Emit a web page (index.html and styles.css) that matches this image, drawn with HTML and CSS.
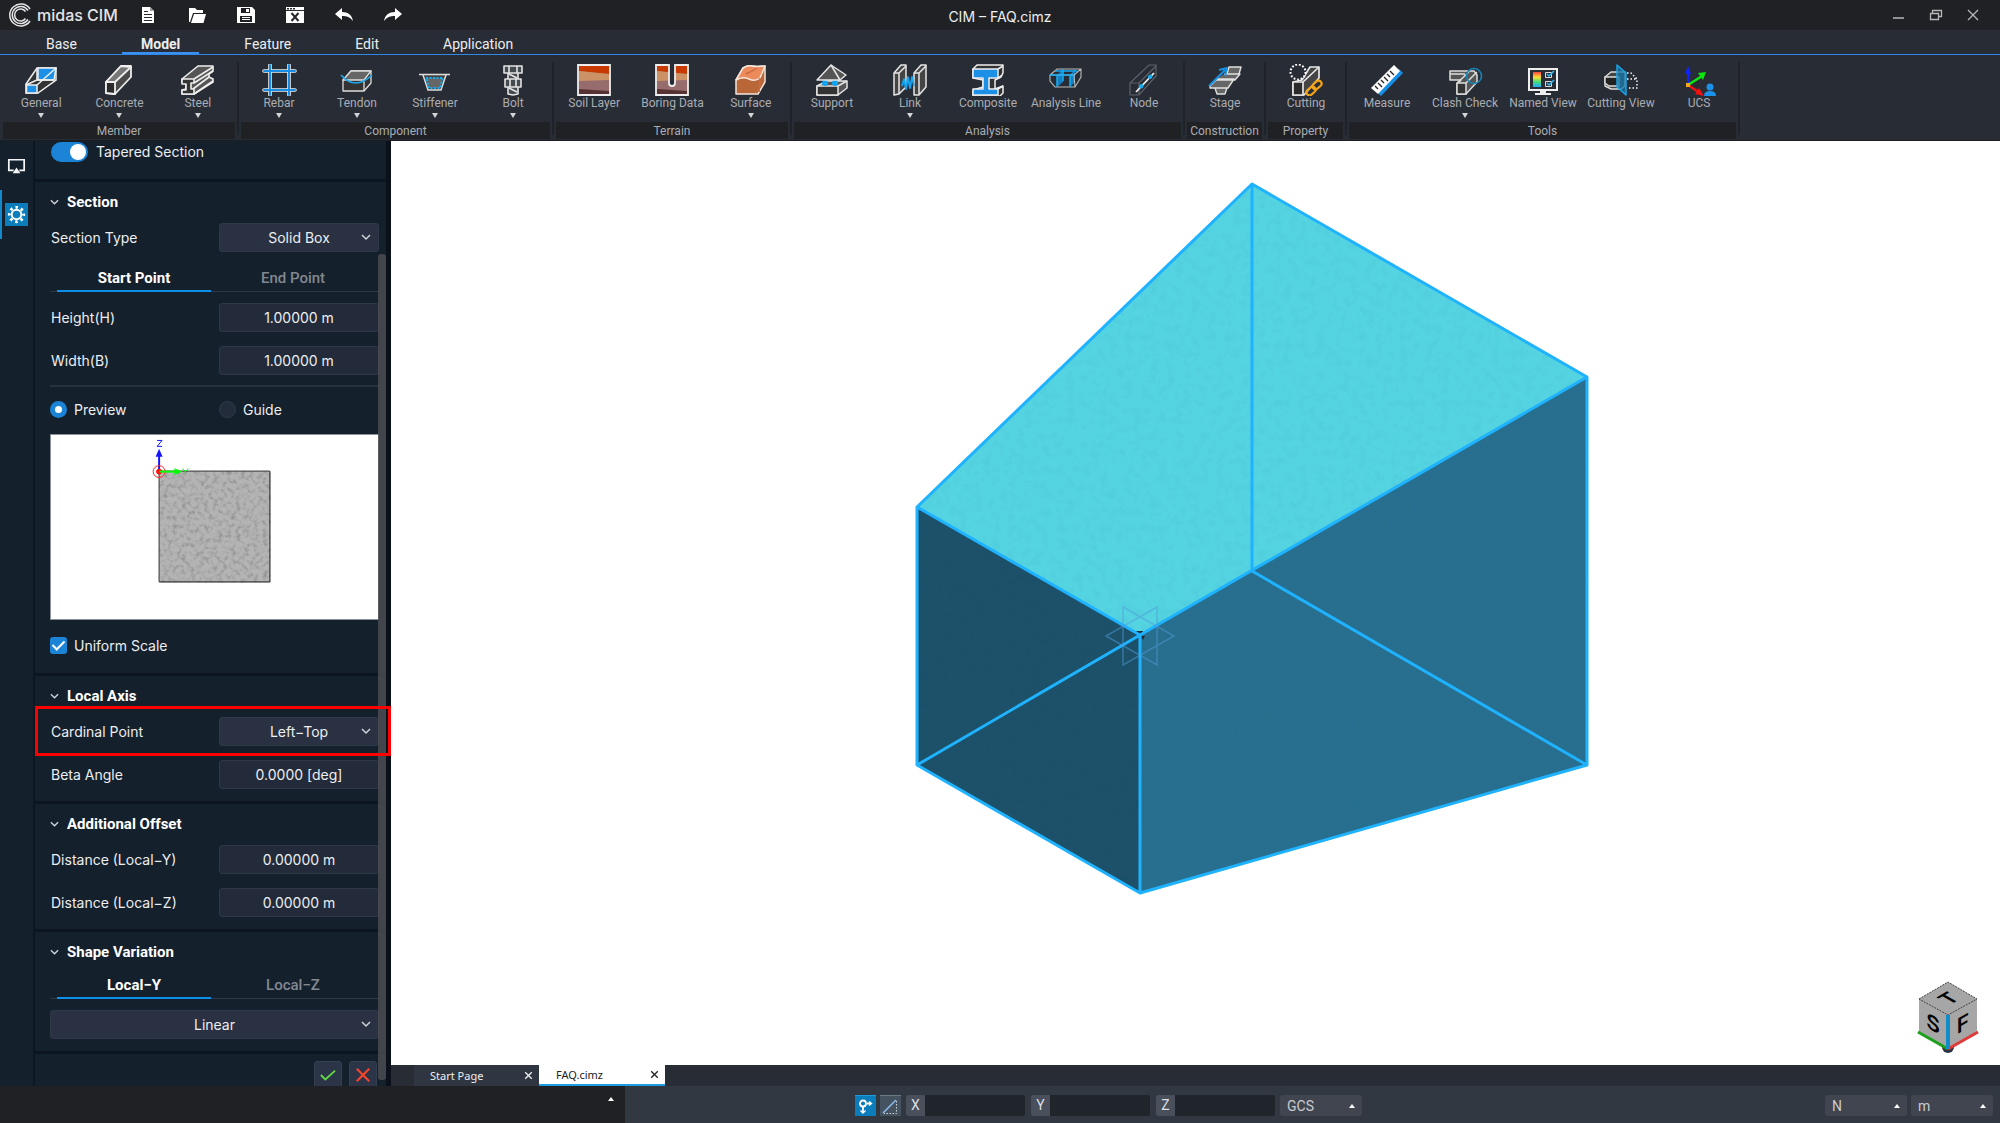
FILE: index.html
```html
<!DOCTYPE html>
<html lang="en">
<head>
<meta charset="utf-8">
<title>CIM – FAQ.cimz</title>
<link rel="stylesheet" href="styles.css">
</head>
<body>
<div class="app">
  <header class="titlebar">
    <div class="brand">
      <svg class="logo" viewBox="0 0 24 24" fill="none" stroke="#e4e4e6" stroke-width="1.5"><path d="M22 6A11 11 0 1 0 22 18"/><path d="M20 7.500A8.500 8.500 0 1 0 20 16.500"/><path d="M17.500 8.500A6 6 0 1 0 17.500 15.500"/></svg>
      <span class="brand-name">midas CIM</span>
    </div>
    <div class="quick">
      <button aria-label="New"><svg viewBox="0 0 20 20"><path fill="#fff" d="M4 2h8l4 4v12H4z"/><path stroke="#26292e" d="M6 6.500h4M6 9.500h8M6 12.500h8M6 15.500h8"/><path fill="#9a9ca0" d="M12 2v4h4z"/></svg></button>
      <button aria-label="Open"><svg viewBox="0 0 20 20"><path fill="#fff" d="M2 17V3h6l2 2h6v3H6L3 17zM4 18l3-9h12l-2.500 9z"/></svg></button>
      <button aria-label="Save"><svg viewBox="0 0 20 20"><path fill="#fff" fill-rule="evenodd" d="M1 2h15l3 3v13H1zM5 3v5h9V3zM4 11v6h12v-6z"/><path fill="#fff" d="M10 4h3v3h-3zM6 12h8v1H6zM6 14h8v1H6z"/></svg></button>
      <button aria-label="Close file"><svg viewBox="0 0 20 20"><path fill="#fff" d="M1 2h18v16H1z"/><path stroke="#26292e" d="M1 5.500h18"/><path stroke="#26292e" stroke-width="1.500" stroke-dasharray="2 1" d="M2 3.800h8"/><path stroke="#26292e" stroke-width="2" d="M6.500 8l7 8M13.500 8l-7 8"/></svg></button>
      <button aria-label="Undo"><svg viewBox="0 0 20 20"><path fill="#fff" d="M1 9l7-6v4c6 0 10 3 11 9-3-4-6-5-11-5v4z"/></svg></button>
      <button aria-label="Redo"><svg viewBox="0 0 20 20"><path fill="#fff" d="M19 9l-7-6v4C6 7 2 10 1 16c3-4 6-5 11-5v4z"/></svg></button>
    </div>
    <h1 class="doc-title">CIM – FAQ.cimz</h1>
    <div class="window-buttons">
      <button aria-label="Minimize"><svg viewBox="0 0 14 14" stroke="#b6b7b9" fill="none"><path stroke-width="1.500" d="M1 10h11"/></svg></button>
      <button aria-label="Restore"><svg viewBox="0 0 14 14" stroke="#b6b7b9" fill="none" stroke-width="1.300"><path d="M1.500 5.500h8v6h-8zM3.500 5.500v-3h9v6h-3"/></svg></button>
      <button aria-label="Close"><svg viewBox="0 0 14 14" stroke="#b6b7b9" fill="none" stroke-width="1.300"><path d="M2 2l10 10M12 2L2 12"/></svg></button>
    </div>
  </header>

  <nav class="menu">
    <a href="#base">Base</a>
    <a href="#model" class="active">Model</a>
    <a href="#feature">Feature</a>
    <a href="#edit">Edit</a>
    <a href="#application">Application</a>
  </nav>

  <div class="ribbon">
    <section class="group">
      <div class="tools">
        <button class="tool more"><svg viewBox="0 0 36 32" stroke="#eee" stroke-width="1.500" fill="#333"><path d="M3 20L14 4h19v12L15 29H3z"/><path fill="#1c8fe6" d="M15 4h18L31 16H15z"/><path fill="#1c8fe6" d="M3.500 21H14v8H3.500z"/><path fill="none" d="M14 21L33 4M14 4v12l-11 5M14 16h17"/></svg><span>General</span></button>
        <button class="tool more"><svg viewBox="0 0 36 32" stroke="#eee" stroke-width="1.800" fill="#4a4a4a" stroke-linejoin="round"><path d="M5 18L20 2h10v11L14 30l-9-1z"/><path fill="#2b2b2b" d="M5 18h9v12l-9-1z"/><path fill="#777" d="M14 18L30 3 20 2 5 18z"/></svg><span>Concrete</span></button>
        <button class="tool more"><svg viewBox="0 0 36 32" stroke="#eee" stroke-width="1.600" fill="#555" stroke-linejoin="round"><path d="M2 15L18 2h15v5l-4 3v3l4 2v3L14 30H2v-4l4-1v-6l-4-1z"/><path fill="#333" d="M2 15h12v4h-3v6h3v5H2v-4h4v-6H2z"/><path fill="none" d="M14 15L33 3M14 19L33 7M13 25l16-12M14 30l19-13"/></svg><span>Steel</span></button>
      </div>
      <h2>Member</h2>
    </section>
    <section class="group">
      <div class="tools">
        <button class="tool more"><svg viewBox="0 0 36 32" fill="none" stroke-linecap="round"><path stroke="#eee" stroke-width="3.600" d="M9 1v30M28 1v30M3 7h31M3 26h31"/><path stroke="#178de6" stroke-width="2" d="M9 1v30M28 1v30M3 7h31M3 26h31"/></svg><span>Rebar</span></button>
        <button class="tool more"><svg viewBox="0 0 36 32" stroke="#ddd" stroke-width="1.300" fill="#333" stroke-linejoin="round"><path d="M4 16L12 7h20v12l-7 8H4z"/><path fill="#666" d="M4 16L12 7h20l-7 9z"/><path fill="none" d="M25 16v11"/><path fill="none" stroke="#1ba9ee" stroke-width="1.700" d="M2 11q14 16 31 0"/></svg><span>Tendon</span></button>
        <button class="tool more"><svg viewBox="0 0 36 32" stroke="#ddd" stroke-width="1.500" fill="#444"><path d="M2 10.500h31M6 11l5 15h13l5-15"/><path fill="#666" stroke="#10b2f5" stroke-width="2" stroke-dasharray="2 1.500" d="M9 14h17l-3 10H12z"/></svg><span>Stiffener</span></button>
        <button class="tool more"><svg viewBox="0 0 36 32" stroke="#e4e4e4" stroke-width="1.600" fill="#444b50" stroke-linejoin="round"><path d="M9 2h18v7H9zM13 9h10v6H13zM10 15h16v8H10zM13 23h10v7l-5 1-5-1z"/><path d="M14 2v7M22 2v7M15 15v8M21 15v8M14 10l8 4M14 24l8 4"/></svg><span>Bolt</span></button>
      </div>
      <h2>Component</h2>
    </section>
    <section class="group">
      <div class="tools">
        <button class="tool"><svg viewBox="0 0 36 32"><path fill="#976c6c" d="M2 0h32v32H2z"/><path fill="#c83a00" d="M3 1h30v9L3 7z"/><path fill="#cc9265" d="M3 7l30 3v6L3 17z"/><path fill="#573232" d="M3 25l30 2v4H3z"/><path fill="none" stroke="#eee" stroke-width="1.800" d="M2 1h32v30H2z"/></svg><span>Soil Layer</span></button>
        <button class="tool"><svg viewBox="0 0 36 32"><path fill="#976c6c" d="M2 0h32v32H2z"/><path fill="#c83a00" d="M3 1h30v9L3 7z"/><path fill="#cc9265" d="M3 7l30 3v6L3 17z"/><path fill="#573232" d="M3 25l30 2v4H3z"/><path fill="#282c35" stroke="#eee" stroke-width="1.800" d="M15 0v19q0 3 3 3t3-3V0"/><path fill="none" stroke="#eee" stroke-width="1.800" d="M14 1H2v30h32V1H22"/></svg><span>Boring Data</span></button>
        <button class="tool more"><svg viewBox="0 0 36 32" stroke="#f4e4da" stroke-width="1.500" stroke-linejoin="round"><path fill="#b96639" d="M3 16L10 4q5-3 9-2t13 0v16L25 30H3z"/><path fill="#ec8a5c" d="M3 16L10 4q5-3 9-2t13 0l-5 12q-5 4-11 1T3 16z"/><path stroke="#c96a3c" fill="none" d="M27 14l-1 14M13 10q5-2 11-6"/></svg><span>Surface</span></button>
      </div>
      <h2>Terrain</h2>
    </section>
    <section class="group">
      <div class="tools">
        <button class="tool"><svg viewBox="0 0 36 32" stroke="#e6e6e6" stroke-width="1.500" fill="#555" stroke-linejoin="round"><path d="M3 22l10-5h20v7l-9 7H3z"/><path fill="#333" d="M3 22h21v9H3zM24 22l9-5"/><circle cx="11" cy="19" r="3" fill="#0ea5f5" stroke="none"/><circle cx="21" cy="19" r="3" fill="#0ea5f5" stroke="none"/><path d="M3 16L17 1l15 10-6 5z"/><path fill="none" d="M17 1l9 15"/></svg><span>Support</span></button>
        <button class="tool more"><svg viewBox="0 0 36 32" stroke="#e6e6e6" stroke-width="1.500" fill="#444" stroke-linejoin="round"><path d="M2 9l7-8h5v22l-7 7-5 1zM22 9l7-8h5v22l-7 8h-5z"/><path fill="none" d="M2 9h5l7-7M7 9v21M22 9h5l7-7M27 9v21"/><path fill="none" stroke="#11a6f5" stroke-width="1.800" d="M10 22l2-7 2 10 2-12 2 11 2-11 2 9"/></svg><span>Link</span></button>
        <button class="tool"><svg viewBox="0 0 36 32" stroke="#eee" stroke-width="1.500" stroke-linejoin="round"><path fill="#333" d="M3 5l4-4h26v8l-2 4-6 3v9l8-3v7l-3 3H3v-6l10-3v-7L3 14z"/><path fill="#1c8fe6" d="M3 5h25v9h-9v11h9v6H3v-6h10V14H3z"/><path fill="none" d="M28 5l5-3M28 14l4-3M28 25l5-3"/></svg><span>Composite</span></button>
        <button class="tool"><svg viewBox="0 0 36 32" stroke="#bbb" stroke-width="1.100" fill="none"><path fill="#147fc1" stroke="none" d="M9 11l6-6v13l-6 5zM22 11l5-6v13l-5 5z"/><path d="M2 11l7-6h24v8l-6 10H7l-5-6zM2 11h24l7-6M26 11l1 12"/><path stroke="#18adf4" stroke-width="1.500" d="M2 11h24M9 11v12M22 11v12M15 5v12M7 7h22"/></svg><span>Analysis Line</span></button>
        <button class="tool"><svg viewBox="0 0 36 32" fill="none" stroke="#5d6167" stroke-width="1.200"><path d="M4 19L23 1h7v11L13 31H4zM4 19h9v12M13 19L30 2"/><path stroke="#f0f0f0" stroke-width="1.800" d="M10 28L28 9"/><path stroke="#16b1f5" stroke-width="4" stroke-linecap="round" d="M15 22.500l.5-.5M24 13l.5-.5"/></svg><span>Node</span></button>
      </div>
      <h2>Analysis</h2>
    </section>
    <section class="group">
      <div class="tools">
        <button class="tool"><svg viewBox="0 0 36 32" stroke="#e0e0e0" stroke-width="1.400" fill="#666" stroke-linejoin="round"><path d="M22 3h12l-2 7H20zM8 16h20l5-6H17M3 22l7-7h17l-6 9H3zM8 24h12l-2 6h-8z"/><path fill="none" stroke="#1592e6" stroke-width="2" d="M2 22L18 6M12 6l8-2-2 8"/></svg><span>Stage</span></button>
      </div>
      <h2>Construction</h2>
    </section>
    <section class="group">
      <div class="tools">
        <button class="tool"><svg viewBox="0 0 36 32" stroke="#e6e6e6" stroke-width="1.700" fill="#444" stroke-linejoin="round"><path d="M5 18l9-2L22 3h9v11L16 31H5z"/><path fill="#2b2b2b" d="M5 18h10v13H5zM15 18L31 3"/><circle cx="10" cy="8" r="7.500" fill="#282c35" stroke="#fff" stroke-width="2" stroke-dasharray="1.800 1.800"/><g fill="none" stroke="#f2a316" stroke-width="2.200"><rect x="18" y="24" width="10" height="6" rx="3" transform="rotate(-40 23 27)"/><rect x="24" y="18" width="10" height="6" rx="3" transform="rotate(-40 29 21)"/></g></svg><span>Cutting</span></button>
      </div>
      <h2>Property</h2>
    </section>
    <section class="group">
      <div class="tools">
        <button class="tool"><svg viewBox="0 0 36 32"><path fill="#188fe6" d="M12 32L34 9l-4-4L8 28z"/><path fill="#fff" d="M2 24L25 1l6 6L9 30z"/><path stroke="#222" stroke-width="1.300" d="M6 22l3 3M9 19l4 4M12 16l3 3M15 13l4 4M18 10l3 3M21 7l4 4"/></svg><span>Measure</span></button>
        <button class="tool more"><svg viewBox="0 0 36 32" stroke="#ddd" stroke-width="1.500" fill="#555" stroke-linejoin="round"><path d="M3 7h24l3 4v7L19 30h-9V20l4-4H3z"/><path fill="#333" d="M10 19h9v11h-9z"/><path fill="none" d="M3 10h15M19 19L30 8M10 19L22 8"/><circle cx="27" cy="12" r="7.500" fill="none" stroke="#1583b5" stroke-width="1.600"/></svg><span>Clash Check</span></button>
        <button class="tool"><svg viewBox="0 0 36 32"><defs><linearGradient id="spectrum" x1="0" y1="0" x2="0" y2="1"><stop stop-color="#f44"/><stop offset=".35" stop-color="#fd3"/><stop offset=".65" stop-color="#4d7"/><stop offset="1" stop-color="#2af"/></linearGradient></defs><path fill="#282c35" stroke="#eee" stroke-width="2" d="M4 5h28v21H4z"/><path fill="url(#spectrum)" d="M8 8h8v15H8z"/><path fill="none" stroke="#ddd" d="M20.500 8.500h6v5h-6zM20.500 17.500h6v5h-6z"/><path fill="none" stroke="#2ab8f8" stroke-width="1.500" d="M22 10l2 2 5-5M22 19l2 2 5-5"/><path fill="#eee" d="M15 26h6v3h5v2H10v-2h5z"/></svg><span>Named View</span></button>
        <button class="tool"><svg viewBox="0 0 36 32" stroke="#ddd" stroke-width="1.400" fill="#444" stroke-linejoin="round"><path d="M2 13l6-5h14v14l-4 3H8l-6-3z"/><path fill="#222" d="M2 13h14v9H6l-4-3z"/><path fill="none" stroke="#fff" stroke-dasharray="1.500 2" d="M24 9h4l6 6v9H24M24 15h10"/><path fill="#1377ab" fill-opacity=".75" stroke="#18a8ee" d="M14 1l9 8v22l-9-8z"/></svg><span>Cutting View</span></button>
        <button class="tool"><svg viewBox="0 0 36 32"><path stroke="#0f23ff" stroke-width="2" d="M7 21V6"/><path fill="#0f23ff" d="M4 10l3-8 3 8z"/><path stroke="#0ce80c" stroke-width="2.500" d="M7 21l14-9"/><path fill="#0ce80c" d="M17 9l8-1-3 8z"/><path stroke="#f01010" stroke-width="2.500" d="M7 21l12 8"/><path fill="#f01010" d="M14 30l4-6 5 8z"/><path fill="#f7a51c" d="M5 19h4v4H5z"/><circle cx="29" cy="23" r="3.500" fill="#1b92ea"/><path fill="#1b92ea" d="M23 32q0-5 6-5t6 5z"/></svg><span>UCS</span></button>
      </div>
      <h2>Tools</h2>
    </section>
  </div>

  <div class="work">
    <aside class="sidebar">
      <div class="rail">
        <button aria-label="Display"><svg viewBox="0 0 24 24" fill="none" stroke="#f4f6f8" stroke-width="1.800"><path d="M9 17H4V6h16v11h-5"/><path fill="#f4f6f8" stroke="none" d="M8 20l4-6 4 6z"/></svg></button>
        <button class="current" aria-label="Properties"><svg viewBox="0 0 24 24" fill="none" stroke="#fff"><circle cx="12" cy="12" r="5" stroke-width="2"/><circle cx="12" cy="12" r="7.500" stroke-width="3" stroke-dasharray="2.600 3.290" stroke-dashoffset="1.300"/></svg></button>
      </div>
      <form class="panel">
        <section class="block first">
          <label class="check"><input type="checkbox" class="toggle" checked>Tapered Section</label>
        </section>
        <section class="block wide-end">
          <h3><svg viewBox="0 0 10 10"><path d="M1 3l4 4 4-4"/></svg>Section</h3>
          <div class="row"><label for="section-type">Section Type</label><div class="select"><select id="section-type"><option>Solid Box</option></select><svg viewBox="0 0 10 10"><path d="M1 3l4 4 4-4"/></svg></div></div>
          <div class="tabs"><button type="button" class="active">Start Point</button><button type="button">End Point</button></div>
          <div class="row"><label for="height">Height(H)</label><input id="height" type="text" value="1.00000 m"></div>
          <div class="row"><label for="width">Width(B)</label><input id="width" type="text" value="1.00000 m"></div>
          <hr>
          <div class="pair"><label class="check"><input type="radio" name="view" checked>Preview</label><label class="check"><input type="radio" name="view">Guide</label></div>
          <svg class="preview" viewBox="0 0 329 186" role="img" aria-label="Section preview">
            <defs><filter id="concrete" x="0" y="0" width="1" height="1"><feTurbulence type="fractalNoise" baseFrequency=".22" numOctaves="4" seed="7"/><feColorMatrix values="0 0 0 0 .1  0 0 0 0 .1  0 0 0 0 .1  .9 0 0 0 -.4"/></filter></defs>
            <path fill="#b5b4b5" d="M109 37h112v112H109z"/>
            <path filter="url(#concrete)" d="M109 37h112v112H109z"/>
            <path fill="none" stroke="#222" d="M108.500 36.500h112v112h-112z"/>
            <path stroke="#1414ff" stroke-width="2" d="M108.500 37V20"/><path fill="#1414ff" d="M105 22l3.500-8 3.500 8z"/><path stroke="#1414ff" fill="none" d="M106.500 5.500h5l-5 6h5"/>
            <circle cx="108.500" cy="37" r="6" fill="none" stroke="#f22"/><circle cx="108.500" cy="37" r="3" fill="#f11"/>
            <path stroke="#0f0" stroke-width="2" d="M109 37h16"/><path fill="#0f0" d="M124 33.500l8 3.500-8 3.500z"/><path stroke="#0f0" fill="none" d="M132 34l3 3 3-3M135 37v3"/>
          </svg>
          <label class="check"><input type="checkbox" checked>Uniform Scale</label>
        </section>
        <section class="block">
          <h3><svg viewBox="0 0 10 10"><path d="M1 3l4 4 4-4"/></svg>Local Axis</h3>
          <div class="row marked"><label for="cardinal">Cardinal Point</label><div class="select"><select id="cardinal"><option>Left−Top</option></select><svg viewBox="0 0 10 10"><path d="M1 3l4 4 4-4"/></svg></div></div>
          <div class="row"><label for="beta">Beta Angle</label><input id="beta" type="text" value="0.0000 [deg]"></div>
        </section>
        <section class="block">
          <h3><svg viewBox="0 0 10 10"><path d="M1 3l4 4 4-4"/></svg>Additional Offset</h3>
          <div class="row"><label for="dist-y">Distance (Local−Y)</label><input id="dist-y" type="text" value="0.00000 m"></div>
          <div class="row"><label for="dist-z">Distance (Local−Z)</label><input id="dist-z" type="text" value="0.00000 m"></div>
        </section>
        <section class="block">
          <h3><svg viewBox="0 0 10 10"><path d="M1 3l4 4 4-4"/></svg>Shape Variation</h3>
          <div class="tabs"><button type="button" class="active">Local−Y</button><button type="button">Local−Z</button></div>
          <div class="select"><select aria-label="Variation"><option>Linear</option></select><svg viewBox="0 0 10 10"><path d="M1 3l4 4 4-4"/></svg></div>
        </section>
        <div class="confirm">
          <button type="button" aria-label="Apply"><svg viewBox="0 0 18 18" fill="none" stroke="#62d945" stroke-width="2"><path d="M1 9l5 5L17 4"/></svg></button>
          <button type="button" aria-label="Cancel"><svg viewBox="0 0 18 18" fill="none" stroke="#f4452c" stroke-width="2.400"><path d="M2 2l14 14M16 2L2 16"/></svg></button>
        </div>
      </form>
      <div class="scrollbar"></div>
    </aside>

    <main class="stage">
      <div class="canvas">
        <svg class="model" viewBox="391 141 1609 924" role="img" aria-label="Tapered solid box">
          <defs><filter id="grain" x="0" y="0" width="1" height="1"><feTurbulence type="fractalNoise" baseFrequency=".12" numOctaves="3" seed="3"/><feColorMatrix values="0 0 0 0 0  0 0 0 0 .1  0 0 0 0 .2  .12 0 0 0 -.06"/><feComposite in2="SourceGraphic" operator="in"/></filter></defs>
          <path fill="#54d3e0" d="M1252 184L1587 377 1140 635 917 507z"/>
          <path fill="#1c5169" d="M917 507l223 128v258L917 765z"/>
          <path fill="#286f8f" d="M1140 635l447-258v388L1140 893z"/>
          <path filter="url(#grain)" d="M1252 184L1587 377v388L1140 893 917 765V507z"/>
          <path fill="#222b33" d="M1136 631h7v3h-7zM1141 636h4l-2 4z"/>
          <g fill="none" stroke="#1eb2ff" stroke-width="3" stroke-linejoin="round">
            <path d="M1252 184L1587 377v388L1140 893 917 765V507zM917 507l223 128 447-258M1140 635v258M1252 184v387l335 194M1140 635L917 765"/>
          </g>
          <path fill="none" stroke="#4f9bd8" stroke-opacity=".5" stroke-width="1.500" d="M1123 607l51 29-51 29zM1157 607v58l-51-29z"/>
        </svg>
        <svg class="cube" viewBox="0 0 64 76" role="img" aria-label="View cube">
          <circle cx="32" cy="68" r="6" fill="#2b3445"/>
          <path fill="#a6a6a6" d="M32 3l29 17v34L32 70 3 54V20z"/>
          <path fill="none" stroke="#444" stroke-dasharray="2 1" d="M3 20L32 3l29 17-29 16z"/>
          <path stroke="#1aa01a" stroke-width="3" d="M2 53l30 17"/><path stroke="#e03a3a" stroke-width="3" d="M62 53L32 70"/><path stroke="#0f8dcb" stroke-width="4" d="M32 36v34"/>
          <text class="face" transform="matrix(1 .58 0 1 17 52)">S</text>
          <text class="face" transform="matrix(1 -.58 0 1 47 52)">F</text>
          <text class="face" transform="matrix(.87 -.5 .87 .5 39 23)">T</text>
        </svg>
      </div>
      <div class="doc-tabs">
        <div class="doc-tab"><a href="#start">Start Page</a><button aria-label="Close Start Page"><svg viewBox="0 0 10 10"><path d="M2 2l6 6M8 2L2 8"/></svg></button></div>
        <div class="doc-tab active"><a href="#faq">FAQ.cimz</a><button aria-label="Close FAQ.cimz"><svg viewBox="0 0 10 10"><path d="M2 2l6 6M8 2L2 8"/></svg></button></div>
      </div>
    </main>
  </div>

  <footer class="status">
    <div class="console"><button class="up" aria-label="Expand log"></button></div>
    <div class="coords">
      <button class="snap on" aria-label="Snap"><svg viewBox="0 0 21 21" fill="none" stroke="#fff" stroke-width="1.800"><circle cx="8" cy="7.500" r="3"/><path d="M8 10.500V17M12 7.500h4"/><path stroke-width="1.400" d="M5.500 14.500L8 17l2.500-2.500M14 5.500l2.500 2-2.500 2"/></svg></button>
      <button class="snap" aria-label="Relative"><svg viewBox="0 0 21 21" fill="none"><path stroke="#8fbdf5" stroke-width="1.500" d="M3 17L16 4"/><path stroke="#c8d2da" stroke-dasharray="1.500 1.500" d="M16.500 5v12.500H4"/></svg></button>
      <label class="axis"><span>X</span><input type="text"></label>
      <label class="axis"><span>Y</span><input type="text"></label>
      <label class="axis"><span>Z</span><input type="text"></label>
      <div class="drop"><select aria-label="Coordinate system"><option>GCS</option></select><i></i></div>
    </div>
    <div class="units">
      <div class="drop"><select aria-label="Force unit"><option>N</option></select><i></i></div>
      <div class="drop"><select aria-label="Length unit"><option>m</option></select><i></i></div>
    </div>
  </footer>
</div>
</body>
</html>
```
FILE: styles.css
```css
* { box-sizing: border-box; }
body, h1, h2, h3 { margin: 0; font-weight: 400; }
body { font-family: Roboto, "Liberation Sans", sans-serif; background: #282c35; color: #eceef0; }
button { border: 0; padding: 0; background: none; color: inherit; font: inherit; }
a { color: inherit; text-decoration: none; }
input, select { font: inherit; color: inherit; border-radius: 0; min-width: 0; }
svg { display: block; flex: none; }

.app { height: 100vh; display: grid; grid-template-rows: 30px 25px 86px minmax(0, 1fr) 37px; }

/* title bar */
.titlebar { display: grid; grid-template-columns: 1fr auto 1fr; align-items: center; background: #202125; grid-template-areas: "left title right"; }
.brand { grid-area: left; display: flex; align-items: center; gap: 5px; padding-left: 8px; }
.logo { width: 24px; height: 24px; }
.brand-name { font: 500 16px/24px Inter, sans-serif; color: #e4e4e6; }
.quick { grid-area: left; display: flex; gap: 29px; padding-left: 138px; }
.quick svg { width: 20px; height: 20px; }
.doc-title { grid-area: title; padding-top: 4px; font: 14px/26px Inter, sans-serif; }
.window-buttons { grid-area: right; justify-self: end; display: flex; gap: 23px; padding-right: 20px; }
.window-buttons svg { width: 14px; height: 14px; }

/* menu */
.menu { display: flex; gap: 26px; padding-left: 27px; font-size: 14px; line-height: 28px; border-bottom: 1px solid #3087e6; }
.menu a { padding: 0 19px; height: 24px; }
.menu .active { font-weight: 700; border-bottom: 2px solid #3b8ff0; }

/* ribbon */
.ribbon { display: grid; grid-template-columns: 238px 315px 238px 393px 81px 81px 393px; padding-left: 2px; border-bottom: 1px solid #1b1d22; color: #a9adb3; font-size: 12px; }
.group { display: flex; flex-direction: column; position: relative; padding: 9px 3px 0 0; }
.group::after { content: ""; position: absolute; right: 1px; top: 7px; bottom: 5px; width: 2px; background: #1f2228; }
.tools { display: flex; height: 58px; }
.tool { flex: 1; display: flex; flex-direction: column; align-items: center; line-height: 15px; white-space: nowrap; }
.tool svg { width: 36px; height: 32px; }
.tool.more::after { content: ""; margin-top: 2px; border: 3px solid transparent; border-top: 5px solid #d4d5d7; border-bottom: 0; }
.group h2 { margin: 0 2px 0 1px; height: 17px; background: #202125; font-size: 12px; line-height: 19px; text-align: center; }

/* work area */
.work { display: grid; grid-template-columns: 391px minmax(0, 1fr); min-height: 0; }
.sidebar { position: relative; display: grid; grid-template-columns: 35px minmax(0, 1fr); padding-right: 5px; background: #0a111b; overflow: hidden; font: 14px/20px Inter, sans-serif; }
.rail { display: flex; flex-direction: column; background: #15202d; border-right: 2px solid #0e1621; }
.rail button { height: 49px; padding: 0 0 0 5px; }
.rail svg { width: 23px; height: 23px; }
.rail .current { border-left: 2px solid #1389cc; padding-left: 3px; }
.rail .current svg { background: #0c7dbb; }
.panel { background: #15202d; min-width: 0; }
.block { display: flex; flex-direction: column; gap: 14px; padding: 10px 7px 12px 15px; border-bottom: 3px solid #0d1520; }
.first { padding-top: 1px; padding-bottom: 17px; }
.wide-end { padding-bottom: 19px; }
.block h3 { display: flex; align-items: center; gap: 8px; margin-bottom: -3px; font: 700 15px/20px Roboto, sans-serif; color: #fff; }
.block h3 svg, .select svg { width: 10px; height: 10px; fill: none; stroke: #cfd3d8; stroke-width: 1.5; }
.block h3 svg { width: 9px; }
.row { display: grid; grid-template-columns: 1fr 160px; align-items: center; position: relative; }
.row > label { padding-left: 1px; line-height: 20px; }
.row input, select { width: 100%; height: 29px; padding: 0; text-align: center; text-align-last: center; border: 1px solid #2e3848; border-radius: 3px; background: #232b3b; }
.select { position: relative; }
.select select { display: block; appearance: none; background: #293142; }
.select svg { position: absolute; right: 8px; top: 9px; pointer-events: none; }
.tabs { display: grid; grid-template-columns: 1fr 1fr; padding-left: 7px; margin: -2px 0 -3px; border-bottom: 1px solid #2c3847; color: #828890; font: 500 15px/20px Roboto, sans-serif; }
.tabs button { height: 27px; padding: 2px 4px 0 0; margin-left: -7px; border-bottom: 2px solid transparent; }
.tabs .active { color: #fff; font-weight: 700; height: 28px; padding-right: 0; margin: 0 7px -1px 0; border-color: #0f8fec; }
hr { width: 100%; margin: -4px 0 0; border: 0; border-top: 2px solid #273241; }
.pair { display: grid; grid-template-columns: 169px 1fr; }
.check { display: flex; align-items: center; gap: 7px; height: 17px; }
.check input { appearance: none; width: 17px; height: 17px; margin: 0; border-radius: 3px; background: #1b84d6; display: grid; place-items: center; }
.check input[type="checkbox"]:not(.toggle)::before { content: ""; width: 5px; height: 10px; margin-top: -3px; border: solid #fff; border-width: 0 2px 2px 0; transform: rotate(45deg); }
.check input[type="radio"] { border-radius: 50%; background: #232c3b; border: 1px solid #303a49; }
.check input[type="radio"]:checked { background: #1b84d6; border: 0; }
.check input[type="radio"]:checked::before { content: ""; width: 7px; height: 7px; border-radius: 50%; background: #fff; }
.first .check { height: 20px; gap: 8px; padding-left: 1px; }
.check .toggle { width: 37px; height: 20px; border-radius: 10px; justify-items: end; padding-right: 2px; }
.check .toggle::before { content: ""; width: 16px; height: 16px; border-radius: 50%; background: #fff; }
.preview { width: 100%; height: 186px; background: #fff; border: 1px solid #8b9198; margin: 2px 0 3px; }
.marked::after { content: ""; position: absolute; inset: -11px -12px -10px -15px; border: 3px solid #f00; z-index: 2; pointer-events: none; }
.confirm { display: flex; justify-content: flex-end; gap: 7px; padding: 7px 9px 0 0; }
.confirm button { width: 28px; height: 28px; padding: 4px 5px; background: #2c3548; border: 1px solid #353f50; border-radius: 3px; }
.confirm svg { width: 16px; height: 18px; }
.scrollbar { position: absolute; right: 5px; top: 113px; bottom: 6px; width: 8px; border-radius: 3px; background: rgba(78, 80, 84, .8); }

.stage { display: flex; flex-direction: column; min-height: 0; }
.canvas { position: relative; flex: 1; min-height: 0; background: #fff; }
.model { width: 100%; height: 100%; }
.cube { position: absolute; right: 20px; bottom: 10px; width: 64px; height: 76px; }
.face { font: 600 21px Inter, sans-serif; text-anchor: middle; fill: #000; }
.doc-tabs { display: flex; height: 21px; padding-left: 23px; font: 11px/21px "Noto Sans", sans-serif; background: #282c35; }
.doc-tab { display: flex; justify-content: space-between; align-items: center; width: 125px; padding: 0 5px 0 16px; background: #303641; }
.doc-tab.active { background: #fff; color: #222; border-bottom: 2px solid #1b9de0; width: 126px; padding-left: 17px; }
.doc-tab svg { width: 11px; height: 11px; stroke: currentColor; fill: none; stroke-width: 1.2; }

/* status bar */
.status { display: grid; grid-template-columns: 625px minmax(0, 1fr) auto; background: #323842; font-size: 14px; }
.console { background: #202125; padding: 1px 11px; text-align: right; line-height: 10px; }
.up, .drop i { display: inline-block; border: 3px solid transparent; border-bottom: 4px solid #fff; border-top: 0; }
.coords { display: flex; padding: 9px 0 7px 230px; }
.snap { width: 21px; height: 21px; margin-right: 4px; background: #45525f; border-top: 1px solid #6a7a84; }
.snap.on { background: #0c7dbb; border-color: #1b9de0; }
.axis { display: flex; width: 119px; height: 21px; margin: 0 5px 0 1px; line-height: 21px; background: #20252c; border-radius: 2px; overflow: hidden; }
.axis span { width: 19px; flex: none; background: #494f5b; text-align: center; color: #dcdfe3; }
.axis input { flex: 1; width: 0; padding: 0 4px; border: 0; background: none; }
.drop { position: relative; width: 82px; height: 21px; }
.drop select { height: 21px; appearance: none; padding-left: 7px; text-align: left; text-align-last: left; border: 0; background: #41454f; color: #c9ccd2; }
.drop i { position: absolute; right: 7px; top: 9px; }
.units { display: flex; gap: 4px; padding: 9px 7px 7px 0; }
```
